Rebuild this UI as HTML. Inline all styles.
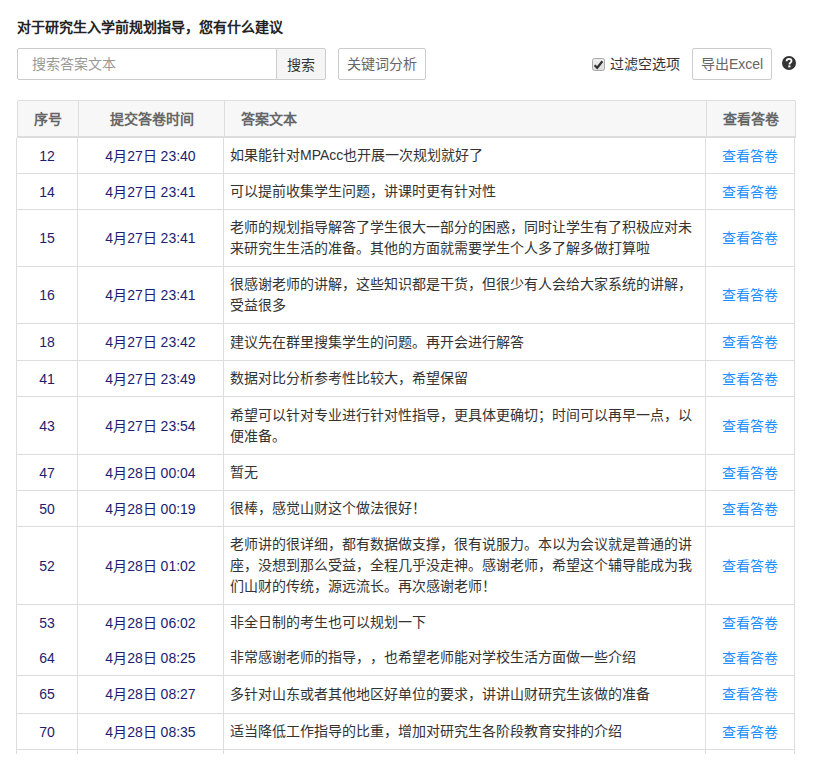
<!DOCTYPE html>
<html lang="zh-CN"><head><meta charset="utf-8">
<style>
*{box-sizing:border-box;margin:0;padding:0}
html,body{width:821px;height:768px;overflow:hidden;background:#fff}
body{position:relative;text-spacing-trim:space-all;font-family:"Liberation Sans",sans-serif;font-size:14px;color:#333}
.abs{position:absolute}
.title{left:17px;top:17px;font-weight:bold;font-size:14px;line-height:20px;color:#222;white-space:nowrap}
.inp{left:17px;top:48px;width:260px;height:32px;border:1px solid #ccc;border-radius:2px 0 0 2px;}
.inp span{position:absolute;left:14px;top:6px;line-height:18px;color:#999}
.btn{top:48px;height:32px;border:1px solid #ccc;line-height:30px;text-align:center;white-space:nowrap}
.b1{left:276px;width:50px;background:#f5f5f5;border-radius:0 2px 2px 0;color:#333;padding-top:2px;line-height:28px}
.b2{left:338px;width:88px;border-radius:2px;color:#666}
.b3{left:692px;width:80px;border-radius:2px;color:#666}
.chktxt{left:610px;top:54px;line-height:20px;color:#333;white-space:nowrap}
.hdr{left:17px;top:100px;width:779px;height:38px;background:#f7f7f7;border:1px solid #ddd;border-bottom:2px solid #ddd;border-radius:2px 2px 0 0}
.hl{position:absolute;top:100px;width:1px;height:37px;background:#ddd}
.ht{position:absolute;top:101px;height:36px;line-height:36px;font-weight:bold;color:#666;white-space:nowrap}
.vl{position:absolute;top:138px;width:1px;height:616px;background:#ddd}
.hz{position:absolute;left:16px;width:779px;height:1px;background:#ddd}
.c1,.c2,.c4{position:absolute;white-space:nowrap;line-height:21px;text-align:center}
.c3{position:absolute;display:flex;align-items:center;white-space:nowrap;line-height:21px}
.c1{left:17px;width:60px;color:#1c1c70}
.c2{left:78px;width:145px;color:#1c1c70}
.c3{left:230px;width:470px;color:#333}
.c4{left:706px;width:88px;color:#1e90ff}
</style></head><body>
<div class="abs title">对于研究生入学前规划指导，您有什么建议</div>
<div class="abs inp"><span>搜索答案文本</span></div>
<div class="abs btn b1">搜索</div>
<div class="abs btn b2">关键词分析</div>
<svg class="abs" style="left:592px;top:58px" width="13" height="13" viewBox="0 0 13 13">
<defs><linearGradient id="g" x1="0" y1="0" x2="0" y2="1"><stop offset="0" stop-color="#f0f0f0"/><stop offset="1" stop-color="#dcdcdc"/></linearGradient></defs>
<rect x="0.5" y="0.5" width="12" height="12" rx="2" fill="url(#g)" stroke="#a8a8a8"/>
<path d="M2.6 7.2 L5.2 9.8 L10.4 3.2" fill="none" stroke="#333" stroke-width="2.2" stroke-linecap="butt" stroke-linejoin="miter"/>
</svg>
<div class="abs chktxt">过滤空选项</div>
<div class="abs btn b3">导出Excel</div>
<svg class="abs" style="left:782px;top:56px" width="14" height="14" viewBox="0 0 14 14">
<circle cx="7" cy="7" r="7" fill="#333"/>
<path d="M4.6 5.3 C4.6 3.6 5.8 2.9 7.1 2.9 C8.5 2.9 9.5 3.8 9.5 5 C9.5 6.3 8.5 6.7 7.9 7.1 C7.5 7.4 7.5 7.7 7.5 8.4" fill="none" stroke="#fff" stroke-width="1.8"/>
<rect x="6.3" y="9.4" width="2.2" height="2" fill="#fff"/>
</svg>

<div class="abs hdr"></div>
<div class="hl" style="left:78px"></div>
<div class="hl" style="left:224px"></div>
<div class="hl" style="left:706px"></div>
<div class="ht" style="left:18px;width:60px;text-align:center">序号</div>
<div class="ht" style="left:79px;width:145px;text-align:center">提交答卷时间</div>
<div class="ht" style="left:241px">答案文本</div>
<div class="ht" style="left:707px;width:88px;text-align:center">查看答卷</div>

<div class="vl" style="left:16px"></div>
<div class="vl" style="left:77px"></div>
<div class="vl" style="left:223px"></div>
<div class="vl" style="left:705px"></div>
<div class="vl" style="left:794px"></div>

<div class="hz" style="top:173px"></div>
<div class="hz" style="top:209px"></div>
<div class="hz" style="top:266px"></div>
<div class="hz" style="top:323px"></div>
<div class="hz" style="top:360px"></div>
<div class="hz" style="top:396px"></div>
<div class="hz" style="top:454px"></div>
<div class="hz" style="top:490px"></div>
<div class="hz" style="top:526px"></div>
<div class="hz" style="top:604px"></div>
<div class="hz" style="top:675px"></div>
<div class="hz" style="top:713px"></div>
<div class="hz" style="top:749px"></div>
<div class="c1" style="top:146px">12</div>
<div class="c2" style="top:146px">4月27日 23:40</div>
<div class="c3" style="top:138px;height:35px"><div>如果能针对MPAcc也开展一次规划就好了</div></div>
<div class="c4" style="top:146px">查看答卷</div>
<div class="c1" style="top:182px">14</div>
<div class="c2" style="top:182px">4月27日 23:41</div>
<div class="c3" style="top:174px;height:35px"><div>可以提前收集学生问题，讲课时更有针对性</div></div>
<div class="c4" style="top:182px">查看答卷</div>
<div class="c1" style="top:228px">15</div>
<div class="c2" style="top:228px">4月27日 23:41</div>
<div class="c3" style="top:210px;height:56px"><div>老师的规划指导解答了学生很大一部分的困惑，同时让学生有了积极应对未<br>来研究生生活的准备。其他的方面就需要学生个人多了解多做打算啦</div></div>
<div class="c4" style="top:228px">查看答卷</div>
<div class="c1" style="top:285px">16</div>
<div class="c2" style="top:285px">4月27日 23:41</div>
<div class="c3" style="top:267px;height:56px"><div>很感谢老师的讲解，这些知识都是干货，但很少有人会给大家系统的讲解，<br>受益很多</div></div>
<div class="c4" style="top:285px">查看答卷</div>
<div class="c1" style="top:332px">18</div>
<div class="c2" style="top:332px">4月27日 23:42</div>
<div class="c3" style="top:324px;height:36px"><div>建议先在群里搜集学生的问题。再开会进行解答</div></div>
<div class="c4" style="top:332px">查看答卷</div>
<div class="c1" style="top:369px">41</div>
<div class="c2" style="top:369px">4月27日 23:49</div>
<div class="c3" style="top:361px;height:35px"><div>数据对比分析参考性比较大，希望保留</div></div>
<div class="c4" style="top:369px">查看答卷</div>
<div class="c1" style="top:416px">43</div>
<div class="c2" style="top:416px">4月27日 23:54</div>
<div class="c3" style="top:397px;height:57px"><div>希望可以针对专业进行针对性指导，更具体更确切；时间可以再早一点，以<br>便准备。</div></div>
<div class="c4" style="top:416px">查看答卷</div>
<div class="c1" style="top:463px">47</div>
<div class="c2" style="top:463px">4月28日 00:04</div>
<div class="c3" style="top:455px;height:35px"><div>暂无</div></div>
<div class="c4" style="top:463px">查看答卷</div>
<div class="c1" style="top:499px">50</div>
<div class="c2" style="top:499px">4月28日 00:19</div>
<div class="c3" style="top:491px;height:35px"><div>很棒，感觉山财这个做法很好！</div></div>
<div class="c4" style="top:499px">查看答卷</div>
<div class="c1" style="top:556px">52</div>
<div class="c2" style="top:556px">4月28日 01:02</div>
<div class="c3" style="top:527px;height:77px"><div>老师讲的很详细，都有数据做支撑，很有说服力。本以为会议就是普通的讲<br>座，没想到那么受益，全程几乎没走神。感谢老师，希望这个辅导能成为我<br>们山财的传统，源远流长。再次感谢老师！</div></div>
<div class="c4" style="top:556px">查看答卷</div>
<div class="c1" style="top:613px">53</div>
<div class="c2" style="top:613px">4月28日 06:02</div>
<div class="c3" style="top:605px;height:35px"><div>非全日制的考生也可以规划一下</div></div>
<div class="c4" style="top:613px">查看答卷</div>
<div class="c1" style="top:648px">64</div>
<div class="c2" style="top:648px">4月28日 08:25</div>
<div class="c3" style="top:640px;height:35px"><div>非常感谢老师的指导，，也希望老师能对学校生活方面做一些介绍</div></div>
<div class="c4" style="top:648px">查看答卷</div>
<div class="c1" style="top:684px">65</div>
<div class="c2" style="top:684px">4月28日 08:27</div>
<div class="c3" style="top:676px;height:37px"><div>多针对山东或者其他地区好单位的要求，讲讲山财研究生该做的准备</div></div>
<div class="c4" style="top:684px">查看答卷</div>
<div class="c1" style="top:722px">70</div>
<div class="c2" style="top:722px">4月28日 08:35</div>
<div class="c3" style="top:714px;height:35px"><div>适当降低工作指导的比重，增加对研究生各阶段教育安排的介绍</div></div>
<div class="c4" style="top:722px">查看答卷</div>
</body></html>
